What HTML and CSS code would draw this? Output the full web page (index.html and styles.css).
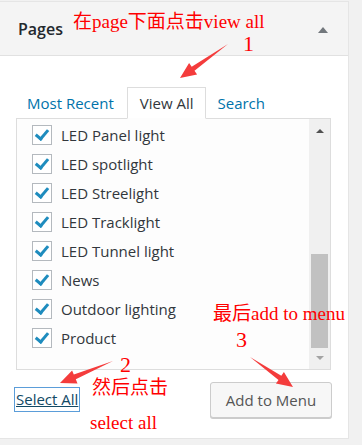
FILE: index.html
```html
<!DOCTYPE html>
<html lang="en">
<head>
    <meta charset="UTF-8">
    <meta name="viewport" content="width=device-width, initial-scale=1.0">
    <title>Pages</title>
    <link rel="stylesheet" href="styles.css">
</head>
<body>
    <div id="page">
        <div id="panel">
            <div id="panel-head">
                <h3>Pages</h3>
                <span class="toggle"></span>
            </div>
            <div id="panel-body">
                <ul id="tabs">
                    <li>Most Recent</li>
                    <li class="active">View All</li>
                    <li>Search</li>
                </ul>
                <div id="list">
                    <ul id="items">
                        <li><span class="check"></span>LED Panel light</li>
                        <li><span class="check"></span>LED spotlight</li>
                        <li><span class="check"></span>LED Streelight</li>
                        <li><span class="check"></span>LED Tracklight</li>
                        <li><span class="check"></span>LED Tunnel light</li>
                        <li><span class="check"></span>News</li>
                        <li><span class="check"></span>Outdoor lighting</li>
                        <li><span class="check"></span>Product</li>
                    </ul>
                    <div id="scrollbar">
                        <span class="arrow up"></span>
                        <span class="thumb"></span>
                        <span class="arrow down"></span>
                    </div>
                </div>
                <div id="actions">
                    <a href="#" class="select-all">Select All</a>
                    <button>Add to Menu</button>
                </div>
            </div>
        </div>

        <!-- annotations drawn over the screenshot -->
        <svg id="arrows" width="362" height="445">
            <polygon points="228,44 194.5,70.8 197.1,74.5 180,78 189.1,63.1 191.7,66.8"/>
            <polygon points="113,361 75.8,379.2 77.5,383.4 60,383 72.1,370.4 73.8,374.6"/>
            <polygon points="250,357 278.5,379.9 275.9,383.5 293,387 283.9,372.1 281.3,375.7"/>
        </svg>
        <span class="note n1">在page下面点击view all</span>
        <span class="note num d1">1</span>
        <span class="note n2">最后add to menu</span>
        <span class="note num d3">3</span>
        <span class="note num d2">2</span>
        <span class="note n3">然后点击</span>
        <span class="note n4">select all</span>
    </div>
</body>
</html>
```

FILE: styles.css
```css
body {
    margin: 0;
    background-color: #f1f1f1;
    font-family: "Open Sans", sans-serif;
}
#page {
    position: relative;
    width: 362px;
    height: 445px;
    overflow: hidden;
}
#panel {
    width: 348px;
    margin-top: 1px;
    margin-left: -1px;
    background-color: #fff;
    border: 1px solid #e5e5e5;
}
#panel-head {
    height: 53px;
    background-color: #f4f4f4;
    border-bottom: 1px solid #e1e1e1;
    display: flex;
    align-items: center;
    justify-content: space-between;
    padding: 0 20px 0 18px;
}
#panel-head h3 {
    margin: 0;
    font-size: 16px;
    font-weight: 600;
    color: #23282d;
}
.toggle {
    width: 0;
    height: 0;
    border-left: 5px solid transparent;
    border-right: 5px solid transparent;
    border-bottom: 6px solid #72777c;
    margin-top: 2px;
}
#panel-body {
    padding: 31px 17px 0 16px;
}
#tabs {
    list-style: none;
    margin: 0;
    padding: 0 0 0 11px;
    display: flex;
    align-items: flex-end;
    font-size: 15px;
    color: #0073aa;
}
#tabs li {
    padding: 6px 12px 5px 0;
    line-height: 19px;
}
#tabs li.active {
    color: #32373c;
    background-color: #fff;
    border: 1px solid #ddd;
    border-bottom-color: #fdfdfd;
    margin-bottom: -1px;
    padding: 6px 12px 5px 12px;
    margin-left: 1px;
    margin-right: 11px;
    position: relative;
}
#list {
    height: 250px;
    border: 1px solid #ddd;
    background-color: #fdfdfd;
    display: flex;
}
#items {
    list-style: none;
    margin: 0;
    padding: 6px 0 0 15px;
    flex-grow: 1;
}
#items li {
    height: 29px;
    display: flex;
    align-items: flex-start;
    font-size: 15px;
    line-height: 20px;
    color: #32373c;
}
.check {
    width: 18px;
    height: 18px;
    border: 1px solid #b4b9be;
    background-color: #fff;
    margin-right: 9px;
    position: relative;
    flex-shrink: 0;
}
.check::after {
    content: "";
    position: absolute;
    left: 5px;
    top: 1px;
    width: 5px;
    height: 10px;
    border-right: 3px solid #1e8cbe;
    border-bottom: 3px solid #1e8cbe;
    transform: rotate(40deg);
}
#scrollbar {
    width: 21px;
    background-color: #f0f0f0;
    display: flex;
    flex-direction: column;
    align-items: center;
}
.arrow {
    width: 0;
    height: 0;
    border-left: 4px solid transparent;
    border-right: 4px solid transparent;
}
.arrow.up {
    border-bottom: 4px solid #505050;
    margin: 10px 0 0;
}
.arrow.down {
    border-top: 4px solid #a3a3a3;
    margin: 8px 0 0;
}
.thumb {
    width: 17px;
    height: 94px;
    background-color: #c1c1c1;
    margin-top: 121px;
}
#actions {
    display: flex;
    justify-content: space-between;
    align-items: flex-start;
    padding: 12px 0 20px;
}
.select-all {
    margin: 6px 0 0 -1px;
    padding: 1px 1px 2px;
    font-size: 15px;
    color: #124964;
    text-decoration: underline;
    box-shadow: 0 0 0 1px #5b9dd9;
}
#actions button {
    width: 122px;
    height: 36px;
    font-family: "Open Sans", sans-serif;
    font-size: 15px;
    color: #555;
    background-color: #f7f7f7;
    border: 1px solid #ccc;
    border-radius: 3px;
    box-shadow: 0 1px 0 #ccc;
    margin-right: -1px;
}
#arrows {
    position: absolute;
    left: 0;
    top: 0;
    fill: #f43c3c;
}
.note {
    position: absolute;
    font-family: "Liberation Serif", "Noto Sans CJK SC", serif;
    color: #f00;
    font-size: 19px;
    line-height: 1;
    white-space: nowrap;
}
.num {
    font-size: 22px;
}
.n1 { left: 73px; top: 12px; }
.d1 { left: 243px; top: 33px; }
.n2 { left: 213px; top: 304px; }
.d3 { left: 236px; top: 329px; }
.d2 { left: 120px; top: 354px; }
.n3 { left: 92px; top: 378px; }
.n4 { left: 90px; top: 413px; }
```
